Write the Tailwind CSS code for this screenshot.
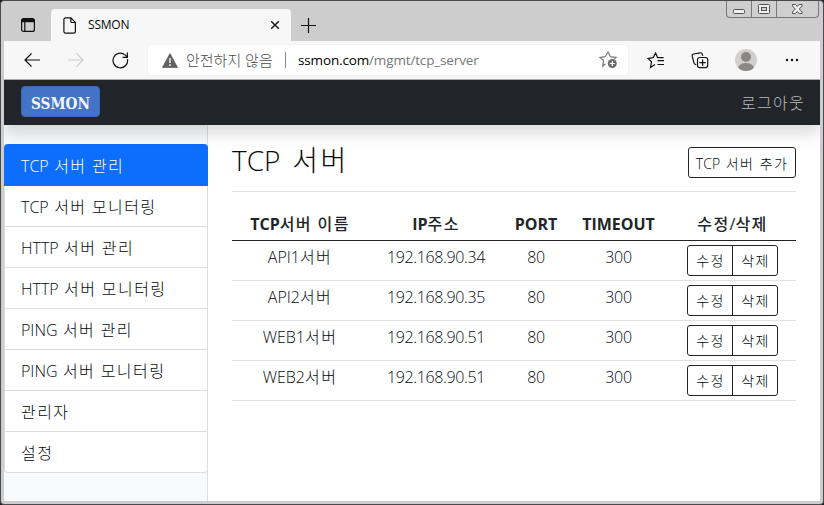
<!DOCTYPE html>
<html lang="ko">
<head>
<meta charset="utf-8">
<title>SSMON</title>
<script src="https://cdn.jsdelivr.net/npm/@tailwindcss/browser@4"></script>
</head>
<body class="w-[824px] h-[505px] overflow-hidden bg-[#1c1c1e] font-['Open_Sans','Noto_Sans_CJK_KR',sans-serif] text-[#050a0e]">
<div class="w-[824px] h-[505px] rounded-[4px] border border-[#4b494b] bg-[#cdcdcd] px-[3px] pb-[3px] flex flex-col relative">
  <div class="absolute right-[4px] top-0 flex h-[17px] w-[93px] rounded-b-[4px] border border-t-0 border-[#78787a] bg-[#cfcfcf]">
    <div class="w-[25px] border-r border-[#78787a]"><svg class="block" width="24" height="16" fill="#eee" stroke="#555"><rect x="6.5" y="8.500" width="11" height="4" rx="1"/></svg></div>
    <div class="w-[25px] border-r border-[#78787a]"><svg class="block" width="24" height="16" fill="#eee" stroke="#555"><rect x="6.500" y="3.500" width="11" height="9" rx="1"/><rect x="9.500" y="6.500" width="5" height="3" fill="#cfcfcf"/></svg></div>
    <div class="flex-1"><svg class="block" width="41" height="16" fill="#eee" stroke="#555"><path d="M15.500 3.500h3l1.800 2 1.800-2h3v1.500l-2.800 3 2.800 3v1.500h-3l-1.800-2-1.800 2h-3v-1.500l2.800-3-2.800-3z"/></svg></div>
  </div>

  <div class="h-[40px] shrink-0 flex items-end">
    <div class="w-[47px] h-[32px] pl-[17px] pt-[9px]">
      <svg class="block" width="14" height="14" fill="none" stroke="#111" stroke-width="1.200"><rect x=".6" y=".6" width="12.800" height="12.800" rx="2"/><path d="M1 1h12v3.200H1z" fill="#111" stroke="none"/><path d="M3.800 4v9"/></svg>
    </div>
    <div class="w-[240px] h-[32px] rounded-t-[4px] bg-[#f7f7f7] flex items-center pl-[12px] pr-[11px]">
      <svg width="14" height="17" fill="none" stroke="#111" stroke-width="1.200"><path d="M2.600.8h5.200l4.600 4.600v9a1.700 1.700 0 0 1-1.700 1.700H2.600A1.700 1.700 0 0 1 .9 14.400v-12A1.700 1.700 0 0 1 2.600.8zM7.800.8v3.400c0 .8.500 1.300 1.200 1.300h3.400"/></svg>
      <span class="ml-[11px] text-[12px] leading-4 tracking-[-0.2px] flex-1">SSMON</span>
      <svg width="10" height="10" stroke="#111" stroke-width="1.400"><path d="M1.200 1.200l7.600 7.600M8.800 1.200L1.200 8.800"/></svg>
    </div>
    <div class="h-[32px] pl-[10px] pt-[9px]"><svg class="block" width="15" height="15" stroke="#111" stroke-width="1.200"><path d="M7.500 0v15M0 7.500h15"/></svg></div>
  </div>

  <div class="h-[39px] shrink-0 bg-[#f7f7f7] border-b border-[#aaa] flex items-center">
    <svg class="ml-[20px]" width="16" height="14" fill="none" stroke="#111" stroke-width="1.200"><path d="M16 7H.8M7.500.5L1 7l6.500 6.500"/></svg>
    <svg class="ml-[28px]" width="16" height="14" fill="none" stroke="#ccc" stroke-width="1.200"><path d="M0 7h15.200M8.500.5L15 7l-6.500 6.500"/></svg>
    <svg class="ml-[28px]" width="17" height="17" fill="none" stroke="#111" stroke-width="1.200"><path d="M15.500 7.200A7.300 7.300 0 1 1 13 2.900l2.200 2M15.400.5v4.800h-4.800"/></svg>
    <div class="ml-[19px] h-[30px] w-[480px] rounded-[4px] bg-white shadow-[0_0_3px_rgba(0,0,0,0.04)] flex items-center text-[13.5px]">
      <svg class="ml-[14px]" width="16" height="15"><path d="M8 .3L15.800 14.700H.2z" fill="#5f6062" stroke="#5f6062" stroke-linejoin="round" stroke-width=".5"/><path d="M8 5v5M8 11.300v1.700" stroke="#fff" stroke-width="1.400"/></svg>
      <span class="ml-[8px] w-[91px] whitespace-nowrap font-light text-[#4b4c4e] text-[15px]">안전하지 않음</span>
      <span class="ml-[8px] w-px h-[16px] bg-[#888]"></span>
      <span class="ml-[12px] flex-1 whitespace-nowrap tracking-[-0.15px] text-[#767676]"><span class="text-black">ssmon.com</span>/mgmt/tcp_server</span>
      <svg class="mr-[10px]" width="19" height="18" fill="none" stroke="#777" stroke-width="1.200"><path d="M6.500 12.900L3.800 15.200l.8-5.800L1 6.500l5.200-.8L9 1l2.500 4.700 5.500.8-1.500 1.500"/><circle cx="13.300" cy="12.500" r="4.500" fill="#6c6c6c" stroke="none"/><path d="M10.800 12.500h5M13.300 10v5" stroke="#fff"/></svg>
    </div>
    <svg class="ml-[19px]" width="18" height="17" fill="none" stroke="#111" stroke-width="1.200"><path d="M8 12.500l-4.500 2.900 1-5.600L1 6.400l5.200-.8L8.600 1l2 4.600h6M10.500 8.700H17M10.500 12.500H17"/></svg>
    <svg class="ml-[26px]" width="18" height="17" fill="none" stroke="#111" stroke-width="1.200"><path d="M5.200 12.700c-1.500-.2-2-.9-2.200-1.800L1.200 4.200C1 3 1.500 2.300 2.600 2L9 .8c1.200-.2 2 .2 2.300 1.300l.4 1.700"/><rect x="6.500" y="5.500" width="10.200" height="10.200" rx="2.200"/><path d="M11.600 7.500v6.400M8.400 10.700h6.400"/></svg>
    <svg class="ml-[26px]" width="22" height="22"><clipPath id="av"><circle cx="11" cy="11" r="11"/></clipPath><g clip-path="url(#av)"><path fill="#d2d0ce" d="M0 0h22v22H0z"/><circle cx="11" cy="8" r="5" fill="#8a8886"/><ellipse cx="11" cy="18.800" rx="7.800" ry="4.800" fill="#8a8886"/></g></svg>
    <svg class="ml-[28px]" width="14" height="4" fill="#111"><circle cx="2" cy="2" r="1.200"/><circle cx="7" cy="2" r="1.200"/><circle cx="12" cy="2" r="1.200"/></svg>
  </div>

  <div class="h-[45px] shrink-0 bg-[#212529] flex items-center justify-between pl-[17px] pr-[15px] relative z-10 shadow-[0_8px_16px_rgba(0,0,0,0.15)] [clip-path:inset(0_0_-30px_0)]">
    <div class="w-[79px] h-[31px] mb-[2px] rounded-[4px] border border-[#3f68b4] bg-[#4472c4]">
      <svg class="block overflow-visible" width="77" height="29"><text x="9" y="21.500" textLength="59" lengthAdjust="spacingAndGlyphs" fill="#f4f6fb" class="font-['DejaVu_Serif_Condensed','DejaVu_Serif',serif] font-bold text-[16.500px]">SSMON</text></svg>
    </div>
    <span class="font-light text-[16px] tracking-[0.08em] text-[#b8babb] whitespace-nowrap">로그아웃</span>
  </div>

  <div id="page" class="flex-1 min-h-0 flex bg-white [word-spacing:0.08em]">
    <nav class="w-[204px] shrink-0 bg-[#f8f9fa] border-r border-[#dcddde] pt-[19px]">
      <ul class="w-[204px] text-[16px] font-light whitespace-nowrap">
        <li class="h-[42px] pl-[17px] pt-[10px] bg-[#0d6efd] text-white rounded-t-[4px]">TCP 서버 관리</li>
        <li class="h-[41px] pl-[16px] pt-[9px] bg-white border-x border-b border-[#dcddde]">TCP 서버 모니터링</li>
        <li class="h-[41px] pl-[16px] pt-[9px] bg-white border-x border-b border-[#dcddde]">HTTP 서버 관리</li>
        <li class="h-[41px] pl-[16px] pt-[9px] bg-white border-x border-b border-[#dcddde]">HTTP 서버 모니터링</li>
        <li class="h-[41px] pl-[16px] pt-[9px] bg-white border-x border-b border-[#dcddde]">PING 서버 관리</li>
        <li class="h-[41px] pl-[16px] pt-[9px] bg-white border-x border-b border-[#dcddde]">PING 서버 모니터링</li>
        <li class="h-[41px] pl-[16px] pt-[9px] bg-white border-x border-b border-[#dcddde]">관리자</li>
        <li class="h-[41px] pl-[16px] pt-[9px] bg-white border-x border-b border-[#dcddde] rounded-b-[4px]">설정</li>
      </ul>
    </nav>
    <main class="flex-1 px-[24px]">
      <div class="h-[67px] border-b border-[#dee2e6] flex justify-between">
        <h1 class="mt-[15px] text-[28px] leading-[40px] font-light whitespace-nowrap [word-spacing:0.16em]">TCP 서버</h1>
        <button class="mt-[22px] w-[108px] h-[31px] pt-[2px] rounded-[3px] border border-[#212529] text-[14px] font-light whitespace-nowrap [word-spacing:0.15em]">TCP 서버 추가</button>
      </div>
      <table class="mt-[15px] w-[564px] table-fixed border-collapse text-center text-[16px] leading-6 font-light">
        <colgroup><col class="w-[136px]"><col class="w-[136px]"><col class="w-[64px]"><col class="w-[101px]"><col class="w-[127px]"></colgroup>
        <thead><tr class="h-[33px] border-b border-[#212529] font-bold text-[#212529] whitespace-nowrap"><th class="pt-[2px]">TCP서버 이름</th><th class="pt-[2px]">IP주소</th><th class="pt-[2px]">PORT</th><th class="pt-[2px]">TIMEOUT</th><th class="pt-[2px] font-medium">수정/삭제</th></tr></thead>
        <tbody id="rows"></tbody>
      </table>
    </main>
  </div>
</div>
<template id="row">
  <tr class="h-[40px] border-b border-[#dee2e6] align-top"><td class="pt-[4px]"></td><td class="pt-[4px] tracking-[-0.35px]"></td><td class="pt-[4px] tracking-[-0.35px]">80</td><td class="pt-[4px] tracking-[-0.35px]">300</td>
    <td class="pt-[4px]"><div class="mx-auto w-[91px] h-[31px] flex rounded-[3px] border border-[#212529] text-[14px]"><button class="w-[45px] pt-[2px] pl-px border-r border-[#212529]">수정</button><button class="flex-1 pt-[2px] pl-px">삭제</button></div></td></tr>
</template>
<script>
  const servers = [['API1서버','192.168.90.34'],['API2서버','192.168.90.35'],['WEB1서버','192.168.90.51'],['WEB2서버','192.168.90.51']];
  for (const [name, ip] of servers) {
    const tr = document.getElementById('row').content.cloneNode(true);
    const td = tr.querySelectorAll('td');
    td[0].textContent = name;
    td[1].textContent = ip;
    document.getElementById('rows').append(tr);
  }
  // Hangul runs are set slightly looser than Latin ones
  for (const el of document.querySelectorAll('#page li, #page h1, #page th, #page td, #page button')) {
    if (el.children.length) continue;
    const weight = el.tagName === 'TH' ? 'font-medium' : 'font-light';
    el.innerHTML = el.textContent.replace(/[가-힣]+/g, `<span class="tracking-[0.09em] ${weight}">$&</span>`);
  }
</script>
</body>
</html>
